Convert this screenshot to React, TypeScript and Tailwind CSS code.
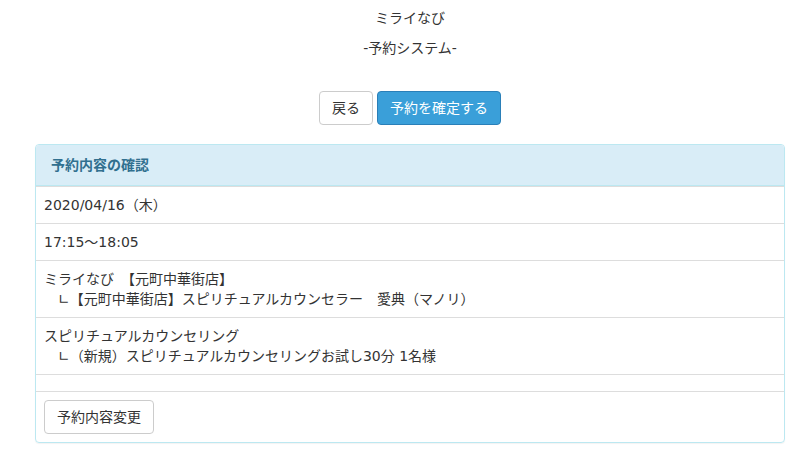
export default function App() {
  const font = { fontFamily: '"DejaVu Sans", "Noto Sans CJK JP", sans-serif' };
  return (
    <div className="min-h-[468px] bg-white text-[14px] leading-[20px] text-[#333]" style={font}>
      <div className="ml-[35px] w-[750px] pt-[8px]">
        {/* title */}
        <div className="text-center">ミライなび</div>
        <div className="mt-[10px] text-center">-予約システム-</div>

        {/* actions */}
        <div className="mt-[33px] flex justify-center gap-[4px]">
          <button className="h-[34px] rounded-[4px] border border-[#ccc] bg-white px-[12px] text-[#333]">
            戻る
          </button>
          <button className="h-[34px] rounded-[4px] border border-[#2a7fb8] bg-[#3a9fd9] px-[12px] text-white">
            予約を確定する
          </button>
        </div>

        {/* panel */}
        <div className="mt-[19px] overflow-hidden rounded-[4px] border border-[#bce8f1] shadow-[0_1px_1px_rgba(0,0,0,0.05)]">
          <div className="border-b border-[#bce8f1] bg-[#d9edf7] px-[15px] py-[10px] font-bold text-[#31708f]">予約内容の確認</div>
          <div className="border-t border-[#ddd] p-[8px]">2020/04/16（木）</div>
          <div className="border-t border-[#ddd] p-[8px]">17:15～18:05</div>
          <div className="border-t border-[#ddd] p-[8px]">
            <div>ミライなび　【元町中華街店】</div>
            <div>　∟【元町中華街店】スピリチュアルカウンセラー　愛典（マノリ）</div>
          </div>
          <div className="border-t border-[#ddd] p-[8px]">
            <div>スピリチュアルカウンセリング</div>
            <div>　∟（新規）スピリチュアルカウンセリングお試し30分 1名様</div>
          </div>
          <div className="h-[17px] border-t border-[#ddd]" />
          <div className="border-t border-[#ddd] p-[8px]">
            <button className="h-[34px] rounded-[4px] border border-[#ccc] bg-white px-[12px] text-[#333]">
              予約内容変更
            </button>
          </div>
        </div>
      </div>
    </div>
  );
}
